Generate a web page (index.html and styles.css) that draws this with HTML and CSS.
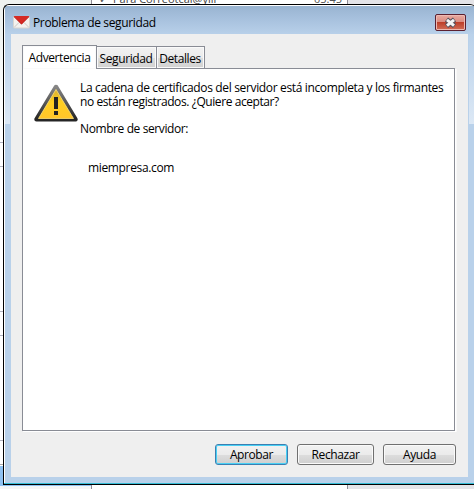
FILE: index.html
```html
<!DOCTYPE html>
<html lang="es">
<head>
<meta charset="utf-8">
<title>Problema de seguridad</title>
<link rel="stylesheet" href="styles.css">
</head>
<body>
<div class="desktop">
  <div class="side"><i class="r1"></i><i class="r2"></i><i class="r3"></i><i class="r4"></i><i class="r5"></i><i class="sel"></i></div>
  <div class="mail"><span class="check">✓</span><span class="subject">Para Corréotcal@ylil</span><span class="time">05:45</span></div>
  <div class="rest"></div>
</div>
<section class="dialog">
  <header class="titlebar">
    <svg class="envelope" width="17" height="13" viewBox="0 0 17 13"><rect x=".5" y=".5" width="16" height="11.500" rx="1" fill="#f4f2ef" stroke="#d9d5d0"/><path d="M1 11.500 6 6.500M16 11.500 11 6.500" stroke="#cdc8c5" fill="none"/><path d="M.5 0h16L9.500 7.500q-1 1-2 0Z" fill="#d62a24"/><path d="M1 .8 8.500 8 16 .8" fill="none" stroke="#b61c1c" stroke-width=".8"/></svg>
    <h1>Problema de seguridad</h1>
    <button class="close" aria-label="Cerrar"><svg width="29" height="15" viewBox="0 0 29 15"><path d="M10.500 4.500 18.500 11M18.500 4.500 10.500 11" stroke="#54505c" stroke-width="5"/><path d="M11 4.800 18 10.700M18 4.800 11 10.700" stroke="#f5f5f5" stroke-width="3"/></svg></button>
  </header>
  <main class="content">
    <nav class="tabs"><button class="tab active">Advertencia</button><button class="tab second">Seguridad</button><button class="tab third">Detalles</button></nav>
    <div class="panel">
      <svg class="warning" width="46" height="40" viewBox="0 0 46 40">
        <defs><linearGradient id="edge" x2="0" y2="1"><stop stop-color="#858585"/><stop offset="1" stop-color="#252525"/></linearGradient><linearGradient id="gold" x2="0" y2="1"><stop stop-color="#d9b132"/><stop offset=".45" stop-color="#ffcf20"/><stop offset="1" stop-color="#ffc52b"/></linearGradient></defs>
        <path d="M23 4 42.500 36.300H3.500Z" fill="url(#edge)" stroke="url(#edge)" stroke-width="4.500" stroke-linejoin="round"/>
        <path d="M23 6.500 40.500 35.500H5.500Z" fill="url(#gold)" stroke="#ffe276" stroke-width=".8" stroke-linejoin="round"/>
        <path d="M21 14h4v12h-4zM21 28h4v4h-4z" fill="#222"/>
      </svg>
      <div class="message">
        <p>La cadena de certificados del servidor está incompleta y los firmantes<br><span class="tight">no están registrados. ¿Quiere aceptar?</span></p>
        <p class="label">Nombre de servidor:</p>
        <p class="server">miempresa.com</p>
      </div>
    </div>
    <footer class="actions"><button class="btn default">Aprobar</button><button class="btn reject">Rechazar</button><button class="btn help">Ayuda</button></footer>
  </main>
</section>
</body>
</html>
```
FILE: styles.css
```css
*{box-sizing:border-box}
body{margin:0;width:474px;height:489px;overflow:hidden;position:relative;font:12px/14px "Open Sans","Noto Sans",sans-serif;letter-spacing:-.35px;color:#000}
p,h1{margin:0;font:inherit}
button{font:inherit;letter-spacing:-.4px;color:inherit;padding:0;margin:0;white-space:nowrap}
svg{display:block;fill:none}
.desktop{display:grid;grid-template-columns:91px 257px 1fr;height:489px}
.side{background:linear-gradient(#eff2f0 34px,#fff 122px);display:flex;flex-direction:column}
.side i{border-bottom:1px solid #b3b4c1;flex:none}
.r1{height:143px}.r2{height:24px}.r3{height:145px}.r4{height:24px}.r5{height:105px}
.side .sel{height:46px;margin-top:23px;border-top:1px solid #aaa;border-bottom:0;background:linear-gradient(#fff 1px,#8fc1f1 1px,#8fc1f1 21px,#f5f5f5 21px)}
.mail{background:#fff;border:solid #8e8c96;border-width:0 1px;display:flex;height:489px;color:#555;font-size:11px;line-height:12px;letter-spacing:0}
.mail span{margin-top:-7px;white-space:nowrap}
.mail .check{width:21px;padding-left:7px}
.mail .subject{width:201px;color:#444}
.rest{background:#e4e4e8}
.dialog{position:absolute;left:3px;top:4px;width:473px;height:481px;border:1px solid #000;border-right:0;border-radius:6px 6px 0 0;background:
  linear-gradient(#b9d1ea,#dce8f5) 1px 29px/5px 90px no-repeat,
  linear-gradient(#b9d1ea,#dce8f5) 465px 29px/7px 90px no-repeat,
  linear-gradient(90deg,#fff 1px,transparent 1px),
  linear-gradient(#fff 1px,#99b4d1 1px,#a5bfdc 12px,#b9d1ea 30px,#b9d1ea 100%);
  box-shadow:inset 0 -1px #36bdd6;padding-left:7px}
.titlebar{height:29px;display:flex;padding-top:9px}
.envelope{margin:2px 0 0 2px}
h1{width:402px;margin-left:3px;padding-top:2px;white-space:nowrap}
.close{width:31px;height:17px;border:1px solid #5b2030;border-radius:2px;background:linear-gradient(#e9aaa1,#d98a7f 48%,#bd3f2a 50%,#d16e58);box-shadow:inset 0 0 0 1px #edb9b2}
.content{width:457px;height:443px;background:#efefef;padding:11px 13px 0 11px}
.tabs{height:23px;display:flex;align-items:flex-end}
.tab{height:22px;border:1px solid #898c95;border-left:0;border-bottom:0;background:linear-gradient(#f2f2f2,#ebebeb 50%,#ddd 51%,#d1d1d1);box-shadow:inset 0 0 0 1px #fafafa}
.active{width:75px;height:24px;margin-bottom:-1px;border:1px solid #898c95;border-bottom:0;background:#fff;position:relative;padding-top:1px}
.second{width:60px}.third{width:48px}
.tab:not(.active){padding:3px 1px 0 0}
.panel{width:433px;height:363px;border:1px solid #898c95;background:#fff;box-shadow:1px 1px #fff,2px 1px #f8f8f8;display:flex;padding:12px 0 0 10px}
.warning{margin-top:2px;flex:none}
.message{padding-left:1px;white-space:nowrap}
.tight{letter-spacing:-.42px}
.label{margin-top:13px;letter-spacing:-.4px}.server{margin:25px 0 0 8px}
.actions{display:flex;justify-content:flex-end;gap:9px;margin:13px -1px 0 0}
.btn{height:21px;border:1px solid #707070;border-radius:3px;background:linear-gradient(#f2f2f2,#ebebeb 50%,#ddd 51%,#cfcfcf);box-shadow:inset 0 0 0 1px #fafafa}
.default{width:73px;border-color:#3c7fb1;box-shadow:inset 0 0 0 1px #48d0f5}
.reject{width:77px}.help{width:73px}
```
